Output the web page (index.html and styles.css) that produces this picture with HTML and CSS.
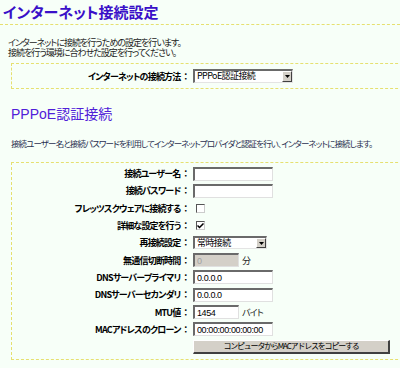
FILE: index.html
```html
<!DOCTYPE html>
<html lang="ja">
<head>
    <meta charset="UTF-8">
    <title>インターネット接続設定</title>
    <link rel="stylesheet" href="styles.css">
</head>
<body>
    <h1 class="title">インターネット接続設定</h1>
    <p class="intro">インターネットに接続を行うための設定を行います。<br>接続を行う環境に合わせた設定を行ってください。</p>

    <div class="box box-method">
        <div class="form">
            <label class="lbl">インターネットの接続方法<span class="colon">：</span></label>
            <div class="field">
                <div class="select select-method"><span class="select-text">PPPoE認証接続</span><span class="select-btn"><svg width="5" height="3" viewBox="0 0 5 3"><path d="M0 0h5L2.5 3z" fill="#000"/></svg></span></div>
            </div>
        </div>
    </div>

    <h2 class="heading">PPPoE認証接続</h2>
    <p class="desc">接続ユーザー名と接続パスワードを利用してインターネットプロバイダと認証を行い、インターネットに接続します。</p>

    <div class="box box-pppoe">
        <div class="form form-rows">
            <label class="lbl">接続ユーザー名<span class="colon">：</span></label>
            <div class="field"><input class="txt" type="text"></div>

            <label class="lbl">接続パスワード<span class="colon">：</span></label>
            <div class="field"><input class="txt" type="password"></div>

            <label class="lbl">フレッツスクウェアに接続する<span class="colon">：</span></label>
            <div class="field"><span class="check"></span></div>

            <label class="lbl">詳細な設定を行う<span class="colon">：</span></label>
            <div class="field"><span class="check"><svg width="7" height="6" viewBox="0 0 7 6"><path d="M0.5 2.5l2 2 4-4" stroke="#000" stroke-width="1.5" fill="none"/></svg></span></div>

            <label class="lbl">再接続設定<span class="colon">：</span></label>
            <div class="field">
                <div class="select select-reconnect"><span class="select-text">常時接続</span><span class="select-btn"><svg width="5" height="3" viewBox="0 0 5 3"><path d="M0 0h5L2.5 3z" fill="#000"/></svg></span></div>
            </div>

            <label class="lbl">無通信切断時間<span class="colon">：</span></label>
            <div class="field"><input class="txt txt-short" type="text" value="0" disabled><span class="unit">分</span></div>

            <label class="lbl">DNSサーバープライマリ<span class="colon">：</span></label>
            <div class="field"><input class="txt" type="text" value="0.0.0.0"></div>

            <label class="lbl">DNSサーバーセカンダリ<span class="colon">：</span></label>
            <div class="field"><input class="txt" type="text" value="0.0.0.0"></div>

            <label class="lbl">MTU値<span class="colon">：</span></label>
            <div class="field"><input class="txt txt-short" type="text" value="1454"><span class="unit">バイト</span></div>

            <label class="lbl">MACアドレスのクローン<span class="colon">：</span></label>
            <div class="field"><input class="txt" type="text" value="00:00:00:00:00:00"></div>

            <span class="lbl"></span>
            <div class="field"><button class="btn" type="button">コンピュータからMACアドレスをコピーする</button></div>
        </div>
    </div>
</body>
</html>
```

FILE: styles.css
```css
html, body {
    overflow: hidden;
}
body {
    margin: 0;
    width: 400px;
    background-color: #f7fff8;
    font-family: "Noto Sans CJK JP", sans-serif;
    font-size: 9px;
    color: #000;
    font-feature-settings: "palt";
}
.title {
    margin: 0;
    height: 25px;
    box-sizing: border-box;
    padding: 2px 0 0 3px;
    line-height: 20px;
    font-size: 15px;
    font-weight: bold;
    color: #3a10c8;
    border-bottom: 1px dashed #e6e070;
}
.intro {
    margin: 13px 0 0 8px;
    line-height: 10px;
    letter-spacing: -1px;
    color: #222;
}
.box {
    margin-left: 11px;
    width: 420px;
    border: 1px dashed #e6e070;
}
.box-method {
    margin-top: 5px;
    height: 24px;
    display: flex;
    align-items: center;
}
.form {
    display: grid;
    grid-template-columns: 176px 240px;
    column-gap: 5px;
    align-items: center;
}
.form-rows {
    grid-auto-rows: 17.3px;
    padding: 2px 0 4px;
}
.lbl {
    text-align: right;
    font-weight: bold;
    white-space: nowrap;
    letter-spacing: -0.8px;
}
.colon {
    display: inline-block;
    margin-left: 3px;
    letter-spacing: 0;
}
.field {
    display: flex;
    align-items: center;
}
.select {
    display: flex;
    height: 14px;
    box-sizing: border-box;
    background: #fff;
    border-style: solid;
    border-width: 2px 1px 1px 2px;
    border-color: #6a6a6a #e4e4e4 #e4e4e4 #6a6a6a;
}
.select-method {
    width: 100px;
}
.select-reconnect {
    width: 74px;
    height: 13px;
}
.select-text {
    flex: 1;
    padding-left: 2px;
    line-height: 10px;
    font-size: 9px;
    letter-spacing: -0.6px;
}
.select-btn {
    width: 10px;
    background: #d4d0c8;
    border-style: solid;
    border-width: 1px;
    border-color: #fff #404040 #404040 #fff;
    box-sizing: border-box;
    display: flex;
    align-items: center;
    justify-content: center;
}
.txt {
    width: 80px;
    height: 14px;
    box-sizing: border-box;
    margin: 0;
    padding: 0 2px;
    font-family: "Liberation Sans", sans-serif;
    font-size: 9px;
    letter-spacing: -0.4px;
    background: #fff;
    border-style: solid;
    border-width: 2px 1px 1px 2px;
    border-color: #6a6a6a #e0e0e0 #e0e0e0 #6a6a6a;
    outline: none;
    color: #000;
}
.txt-short {
    width: 46px;
}
.txt:disabled {
    background: #d4d0c8;
    color: #a0a0a0;
}
.unit {
    margin-left: 3px;
    letter-spacing: -0.8px;
    color: #222;
}
.check {
    width: 9px;
    height: 9px;
    margin-left: 3px;
    box-sizing: border-box;
    background: #fff;
    border-style: solid;
    border-width: 1px;
    border-color: #555 #ccc #ccc #555;
    display: flex;
    align-items: center;
    justify-content: center;
}
.heading {
    margin: 16px 0 0 11px;
    line-height: 18px;
    font-family: "Liberation Sans", "Noto Sans CJK JP", sans-serif;
    font-size: 14px;
    font-weight: normal;
    color: #5020d8;
}
.desc {
    margin: 15px 0 0 11px;
    line-height: 10px;
    font-size: 8.5px;
    letter-spacing: -0.9px;
    white-space: nowrap;
    color: #2a3050;
}
.box-pppoe {
    margin-top: 14px;
}
.btn {
    width: 197px;
    height: 14px;
    padding: 0;
    font-family: "Noto Sans CJK JP", sans-serif;
    font-size: 8px;
    line-height: 10px;
    letter-spacing: -1.2px;
    background: #d4d0c8;
    border-style: solid;
    border-width: 1px 2px 2px 1px;
    border-color: #fff #404040 #404040 #fff;
    color: #000;
}
```
